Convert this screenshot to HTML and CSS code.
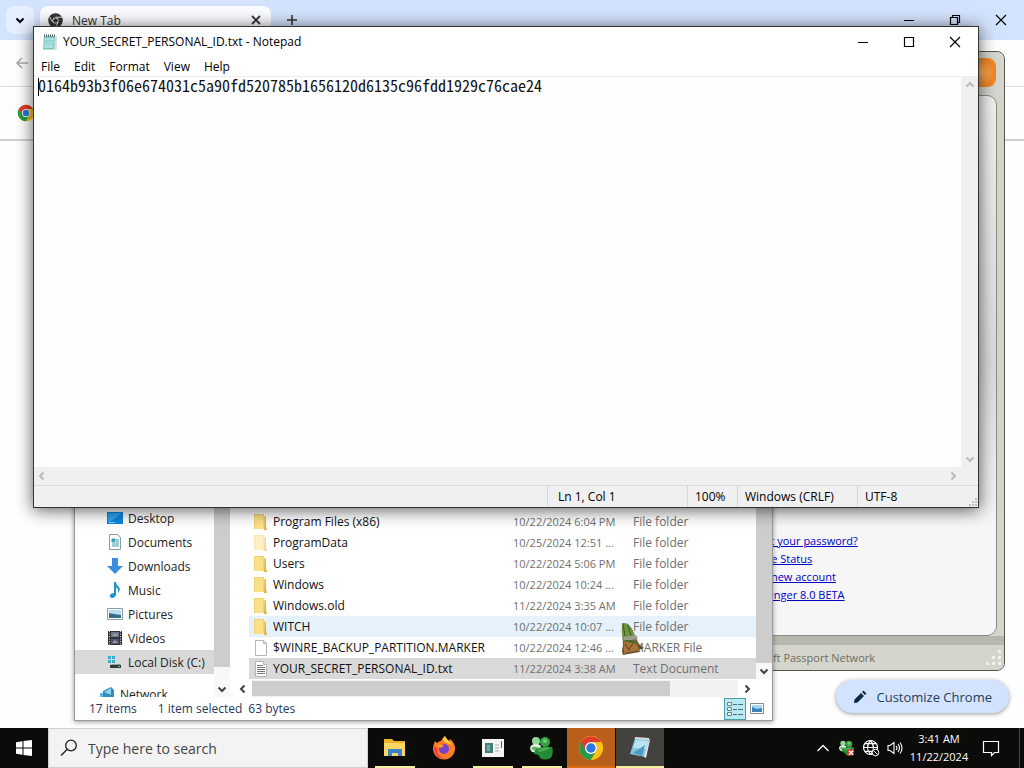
FILE: index.html
```
<!DOCTYPE html>
<html lang="en">
<head>
    <meta charset="UTF-8">
    <meta name="viewport" content="width=device-width, initial-scale=1.0">
    <title>Desktop</title>
    <link rel="stylesheet" href="styles.css">
</head>
<body>
    <!-- Shared icons -->
    <svg class="defs" aria-hidden="true">
        <symbol id="folder" viewBox="0 0 16 18">
            <path d="M1 1h10v2h2v13H1z" fill="#f3d36b"/>
            <path d="M2 2h8v14H2z" fill="#fbe08a"/>
            <path d="M12 4h1v9l1 4h-3z" fill="#dfb54a"/>
        </symbol>
        <symbol id="page" viewBox="0 0 16 18">
            <path d="M2.500 1.500h8l3 3v12h-11z" fill="#fff" stroke="#b5b5b5"/>
            <path d="M10.500 1.500v3h3" fill="none" stroke="#b5b5b5"/>
        </symbol>
        <symbol id="chrome" viewBox="0 0 24 24">
            <circle cx="12" cy="12" r="11" fill="#fbc116"/>
            <path d="M2.500 6.500A11 11 0 0 0 12 23l5-8.500-5-2.500z" fill="#269a48"/>
            <path d="M12 6.500h9.500A11 11 0 0 1 12 23l5-8.500z" fill="#fbc116"/>
            <path d="M2.500 6.500L7 14.500 12 6.500h9.500A11 11 0 0 0 2.500 6.500z" fill="#e33b2e"/>
            <circle cx="12" cy="12" r="5.500" fill="#fff"/>
            <circle cx="12" cy="12" r="4.300" fill="#2f75e0"/>
        </symbol>
        <symbol id="chev" viewBox="0 0 16 16">
            <path d="M4.500 6.500L8 10l3.500-3.500" fill="none" stroke="currentColor" stroke-width="2"/>
        </symbol>
        <symbol id="close" viewBox="0 0 12 12">
            <path d="M1 1l10 10M11 1L1 11" fill="none" stroke="currentColor" stroke-width="1.200"/>
        </symbol>
        <symbol id="min" viewBox="0 0 12 12">
            <path d="M1 6.500h10" stroke="currentColor"/>
        </symbol>
        <symbol id="buddies" viewBox="0 0 24 24">
            <circle cx="6" cy="5" r="4" fill="#8fd99a"/>
            <path d="M0 13q0-5 6-5t5 5l-3 4-6-1z" fill="#dff3df"/>
            <path d="M1 12q3-3 8 0l-2 3-4-1z" fill="#58b565"/>
            <circle cx="15" cy="6" r="5" fill="#35a343"/>
            <path d="M5 14q7-5 17-3 2 5-1 11-7 3-11 0-1-4-6-4z" fill="#238a35"/>
            <path d="M7 14q7-4 13-2-4 3-11 4z" fill="#48ad50"/>
            <circle cx="15" cy="5" r="2" fill="#76cc72"/>
        </symbol>
    </svg>

    <main class="desktop">
        <!-- Chrome -->
        <section class="chrome">
            <div class="tab-strip">
                <button class="tab-search" aria-label="Search tabs"><svg width="16" height="16"><use href="#chev"/></svg></button>
                <div class="tab">
                    <svg width="15" height="15" viewBox="0 0 16 16">
                        <circle cx="8" cy="8" r="5.500" fill="none" stroke="#333" stroke-width="4.500"/>
                        <path d="M8 4.500h7M5 9.700L1.500 4M11 9.700L7.500 15.500" stroke="#e8ecf5" stroke-width="1"/>
                        <circle cx="8" cy="8" r="2.500" fill="#333"/>
                    </svg>
                    <span class="tab-name">New Tab</span>
                    <button class="tab-close" aria-label="Close tab"><svg width="12" height="12" viewBox="0 0 12 12"><path d="M2 2l8 8M10 2l-8 8" stroke="#333" stroke-width="1.800"/></svg></button>
                </div>
                <button class="tab-new" aria-label="New tab"><svg width="12" height="12" viewBox="0 0 12 12"><path d="M6 1v10M1 6h10" stroke="#333" stroke-width="1.600"/></svg></button>
                <div class="win-buttons">
                    <button aria-label="Minimize"><svg width="12" height="12"><use href="#min"/></svg></button>
                    <button aria-label="Restore"><svg width="12" height="12" viewBox="0 0 12 12"><path d="M1.500 3.500h7v7h-7zM3.500 3.500v-2h7v7h-2" fill="none" stroke="#000" stroke-width="1.200"/></svg></button>
                    <button aria-label="Close"><svg width="12" height="12"><use href="#close"/></svg></button>
                </div>
            </div>
            <div class="toolbar">
                <button aria-label="Back"><svg width="14" height="14" viewBox="0 0 14 14"><path d="M13 7H2M7 2L2 7l5 5" fill="none" stroke="#aaa" stroke-width="1.600"/></svg></button>
            </div>
            <div class="infobar"><svg width="18" height="18"><use href="#chrome"/></svg></div>
            <div class="page">
                <button class="customize">
                    <svg width="14" height="14" viewBox="0 0 14 14"><path d="M1 13l.5-3.500L8 3l3 3-6.500 6.500zM9 2l1.500-1.500 3 3L12 5z" fill="#0c2942"/></svg>
                    Customize Chrome
                </button>
            </div>
        </section>

        <!-- Messenger -->
        <section class="messenger">
            <div class="msn-title"><button class="msn-close" aria-label="Close messenger"></button></div>
            <div class="msn-panel">
                <a href="#">Forgot your password?</a>
                <a href="#">Service Status</a>
                <a href="#">Get a new account</a>
                <a href="#">Messenger 8.0 BETA</a>
            </div>
            <div class="msn-footer">
                <span>Microsoft Passport Network</span>
                <svg width="18" height="18" viewBox="0 0 18 18"><path d="M13 1h3v3h-3zM13 7h3v3h-3zM13 13h3v3h-3zM7 7h3v3H7zM7 13h3v3H7zM1 13h3v3H1z" fill="#f2f2ed"/></svg>
            </div>
        </section>

        <!-- File explorer -->
        <section class="explorer">
            <div class="explorer-body">
                <nav class="tree">
                    <a href="#"><svg width="16" height="16" viewBox="0 0 16 16"><path d="M0 2h16v12H0z" fill="#0b84dc"/><path d="M1 3h14L3 12H1z" fill="#2fa3f2"/><path d="M2 12.500h6" stroke="#8fd0ff"/></svg>Desktop</a>
                    <a href="#"><svg width="16" height="16" viewBox="0 0 16 16"><path d="M2.500.5h8l3 3v12h-11z" fill="#fff" stroke="#8a9a9f"/><path d="M5 5h3v3H5zM9 6h3M5 10h7M5 12h7M9 8h3" fill="#4aa" stroke="#3b9dae"/></svg>Documents</a>
                    <a href="#"><svg width="16" height="16" viewBox="0 0 16 16"><path d="M5 0h6v8h5l-8 8-8-8h5z" fill="#3a8ee0"/></svg>Downloads</a>
                    <a href="#"><svg width="16" height="16" viewBox="0 0 16 16"><path d="M7 0h2q0 3 3 5 2 3-1 6 1-4-2-6v8q-1 3-4 3-3-1-2-3 1-2 4-2z" fill="#1d94c9"/></svg>Music</a>
                    <a href="#"><svg width="16" height="16" viewBox="0 0 16 16"><path d="M.5 2.500h15v11H.5z" fill="#fff" stroke="#8c9aa3"/><path d="M2 4h12v8H2z" fill="#b9dcf0"/><path d="M2 7l5 1 7 1v3H2z" fill="#3a6e87"/></svg>Pictures</a>
                    <a href="#"><svg width="16" height="16" viewBox="0 0 16 16"><path d="M1 1h14v14H1z" fill="#333"/><path d="M4 2h8v5H4z" fill="#6b7895"/><path d="M4 9h8v5H4z" fill="#4e5875"/><path d="M2.500 1v14M13.500 1v14" stroke="#ddd" stroke-dasharray="1 1.500"/><path d="M5 6l3-3 3 3zM5 13l3-3 3 3z" fill="#a98"/></svg>Videos</a>
                    <a href="#" class="active"><svg width="16" height="16" viewBox="0 0 16 16"><path d="M1 2h3v3H1zM5 2h3v3H5zM1 6h3v3H1zM5 6h3v3H5z" fill="#35b2d0"/><path d="M3 11h11v3H3z" fill="#333b3f"/><path d="M3 11l2-1h8l1 1z" fill="#8d9699"/><path d="M11 12.500h2" stroke="#3ee07c"/></svg>Local Disk (C:)</a>
                    <a href="#" class="network"><svg width="16" height="16" viewBox="0 0 16 16"><path d="M1 7h7v6H1z" fill="#56b8ea"/><path d="M4 5l8-4 3 3v9H4z" fill="#318dbd"/><path d="M5 6l7-4v7z" fill="#8fd3f2"/></svg>Network</a>
                </nav>
                <div class="vbar"><span class="vthumb nav-thumb"></span><button aria-label="Scroll tree down"><svg width="16" height="16"><use href="#chev"/></svg></button></div>
                <div class="files">
                    <div class="list">
                        <table>
                            <colgroup><col class="c-name"><col class="c-date"><col></colgroup>
                            <tbody>
                                <tr><td><svg width="16" height="18"><use href="#folder"/></svg>Program Files (x86)</td><td>10/22/2024 6:04 PM</td><td>File folder</td></tr>
                                <tr><td><svg width="16" height="18" class="faded"><use href="#folder"/></svg>ProgramData</td><td>10/25/2024 12:51 ...</td><td>File folder</td></tr>
                                <tr><td><svg width="16" height="18"><use href="#folder"/></svg>Users</td><td>10/22/2024 5:06 PM</td><td>File folder</td></tr>
                                <tr><td><svg width="16" height="18"><use href="#folder"/></svg>Windows</td><td>10/22/2024 10:24 ...</td><td>File folder</td></tr>
                                <tr><td><svg width="16" height="18"><use href="#folder"/></svg>Windows.old</td><td>11/22/2024 3:35 AM</td><td>File folder</td></tr>
                                <tr class="hovered"><td><svg width="16" height="18"><use href="#folder"/></svg>WITCH</td><td>10/22/2024 10:07 ...</td><td>File folder</td></tr>
                                <tr><td><svg width="16" height="18"><use href="#page"/></svg>$WINRE_BACKUP_PARTITION.MARKER</td><td>10/22/2024 12:46 ...</td><td>MARKER File</td></tr>
                                <tr class="selected"><td><svg width="16" height="18" viewBox="0 0 16 18"><use href="#page"/><path d="M4 5.500h6M4 7.500h8M4 9.500h8M4 11.500h8M4 13.500h8" stroke="#777"/></svg>YOUR_SECRET_PERSONAL_ID.txt</td><td>11/22/2024 3:38 AM</td><td>Text Document</td></tr>
                            </tbody>
                        </table>
                        <div class="vbar"><span class="vthumb"></span><button aria-label="Scroll files down"><svg width="16" height="16"><use href="#chev"/></svg></button></div>
                    </div>
                    <div class="hbar">
                        <button aria-label="Scroll left"><svg class="left" width="16" height="16"><use href="#chev"/></svg></button>
                        <div class="htrack"><span class="hthumb"></span></div>
                        <button aria-label="Scroll right"><svg class="right" width="16" height="16"><use href="#chev"/></svg></button>
                    </div>
                </div>
            </div>
            <footer class="explorer-status">
                <span class="count">17 items</span>
                <span>1 item selected</span>
                <span>63 bytes</span>
                <div class="views">
                    <button class="on" aria-label="Details"><svg width="18" height="16" viewBox="0 0 18 16"><path d="M1.500 1.500h4v3h-4zM1.500 6.500h4v3h-4zM1.500 11.500h4v3h-4z" fill="#fff" stroke="#6c7f86"/><path d="M7 3.500h4M12 3.500h5M7 8.500h4M12 8.500h5M7 13.500h4M12 13.500h5" stroke="#476f79"/></svg></button>
                    <button aria-label="Thumbnails"><svg width="14" height="12" viewBox="0 0 14 12"><path d="M.5.5h13v10H.5z" fill="#fff" stroke="#7d8b94"/><path d="M2 2h10v7H2z" fill="#3b82bd"/><path d="M2 2h10v3L7 6 2 4z" fill="#a6d4f3"/></svg></button>
                </div>
            </footer>
        </section>

        <!-- Notepad -->
        <section class="notepad">
            <header class="np-title">
                <svg width="16" height="16" viewBox="0 0 16 16"><path d="M2 2h13l-1 13.500H1z" fill="#7cc5c0"/><path d="M3 4h9l-1 10H2z" fill="#a9e3df"/><path d="M13 2h2v13h-3z" fill="#d8dedd"/><path d="M2 1.500h12" stroke="#4c5a5a" stroke-width="2" stroke-dasharray="1 1"/><path d="M3 6.500h8M3 8.500h8M3 10.500h8" stroke="#8fd2cd"/></svg>
                <h1>YOUR_SECRET_PERSONAL_ID.txt - Notepad</h1>
                <div class="win-buttons">
                    <button aria-label="Minimize"><svg width="12" height="12"><use href="#min"/></svg></button>
                    <button aria-label="Maximize"><svg width="12" height="12" viewBox="0 0 12 12"><path d="M1.500 1.500h9v9h-9z" fill="none" stroke="#000" stroke-width="1.200"/></svg></button>
                    <button aria-label="Close"><svg width="12" height="12"><use href="#close"/></svg></button>
                </div>
            </header>
            <div class="np-menu">
                <button>File</button>
                <button>Edit</button>
                <button>Format</button>
                <button>View</button>
                <button>Help</button>
            </div>
            <div class="np-editor">
                <span class="caret"></span>
                <textarea aria-label="Text" spellcheck="false">0164b93b3f06e674031c5a90fd520785b1656120d6135c96fdd1929c76cae24</textarea>
                <div class="np-vbar">
                    <button aria-label="Scroll up"><svg class="up" width="16" height="16"><use href="#chev"/></svg></button>
                    <button aria-label="Scroll down"><svg width="16" height="16"><use href="#chev"/></svg></button>
                </div>
            </div>
            <div class="np-hbar">
                <button aria-label="Scroll text left"><svg class="left" width="16" height="16"><use href="#chev"/></svg></button>
                <button aria-label="Scroll text right"><svg class="right" width="16" height="16"><use href="#chev"/></svg></button>
            </div>
            <footer class="np-status">
                <span class="pos">Ln 1, Col 1</span>
                <span class="zoom">100%</span>
                <span class="eol">Windows (CRLF)</span>
                <span class="enc">UTF-8</span>
                <svg width="10" height="10" viewBox="0 0 10 10"><path d="M7 1h2v2H7zM7 4h2v2H7zM7 7h2v2H7zM4 4h2v2H4zM4 7h2v2H4zM1 7h2v2H1z" fill="#bfbfbf"/></svg>
            </footer>
        </section>

        <!-- Mouse pointer -->
        <svg class="pointer" width="26" height="34" viewBox="0 0 26 34">
            <path d="M1 1l6 1 4 5 4 9 3 6 5 4-5 2 1 2-17 3q-2-4 0-9z" fill="#6e5a30"/>
            <path d="M1 1l6 1 4 5 4 9-13 3q-2-9-1-18z" fill="#6f9440"/>
            <path d="M2 2l2 12M7 3l3 11" stroke="#3c5c24" fill="none"/>
            <path d="M3 15l12-2 2 4-14 2z" fill="#9aa08c"/>
            <path d="M3 20l11-2 4 10-15 3z" fill="#a8743a"/>
            <path d="M4 22l5 7M14 19l-6 8M17 23l4 4" stroke="#4d3c22" fill="none"/>
            <path d="M2 18h10l5 4-7-1z" fill="#4c6a2e"/>
        </svg>
    </main>

    <!-- Taskbar -->
    <footer class="taskbar">
        <button class="start" aria-label="Start"><svg width="16" height="16" viewBox="0 0 16 16"><path d="M0 2.300L6.500 1.300v6.200H0zM7.500 1.100L16 0v7.500H7.500zM0 8.500h6.500v6.200L0 13.700zM7.500 8.500H16V16l-8.500-1.100z" fill="#fff"/></svg></button>
        <div class="search">
            <svg width="18" height="18" viewBox="0 0 18 18"><circle cx="11" cy="6.500" r="5.300" fill="none" stroke="#222" stroke-width="1.300"/><path d="M7 10.500L1 16.500" stroke="#222" stroke-width="1.400"/></svg>
            <input type="text" placeholder="Type here to search" aria-label="Type here to search">
        </div>
        <div class="apps">
            <button class="open" aria-label="File Explorer"><svg width="24" height="24" viewBox="0 0 24 24"><path d="M1 3h8l2 2h11v15H1z" fill="#f0b429"/><path d="M1 7h21v13H1z" fill="#fdd663"/><path d="M5 20v-7h14v7h-4v-3H9v3z" fill="#3b82cf"/></svg></button>
            <button aria-label="Firefox"><svg width="24" height="24" viewBox="0 0 24 24"><path d="M3 5l2 2q2-2 4-2 1-3 4-5 1 3 4 5l1-2q5 4 5 9a11 11 0 0 1-22 1Q1 9 3 5z" fill="#ff7b24"/><path d="M13 0q1 3 5 6 5 5 2 12 4-8-2-10-6-1-7-5z" fill="#ffd33b"/><path d="M2 11q0 12 12 12Q4 21 5 12z" fill="#ef3651"/><circle cx="12" cy="13" r="5" fill="#7542c9"/><path d="M5 9q5-2 7 1l-4 2z" fill="#ffa12e"/></svg></button>
            <button class="open" aria-label="Application"><svg width="24" height="24" viewBox="0 0 24 24"><path d="M1 3h22v18H1z" fill="#f4f4f4"/><path d="M4 7h8v10H4z" fill="#417f78"/><path d="M6 9h3v6H6z" fill="#74aaa0"/><path d="M14 9h4M14 12h4M14 15h4" stroke="#aaa"/><path d="M20.500 5v7" stroke="#555"/></svg></button>
            <button class="open" aria-label="Messenger"><svg width="24" height="24"><use href="#buddies"/></svg></button>
            <button class="open current" aria-label="Chrome"><svg width="26" height="26"><use href="#chrome"/></svg></button>
            <button class="open lit" aria-label="Notepad"><svg width="24" height="24" viewBox="0 0 24 24"><path d="M7 2l14 1-4 18-15-3z" fill="#86c5df"/><path d="M8 4l12 1-2 8-13-1z" fill="#b9e3f0"/><path d="M21 3l1 1-4 18-2-1z" fill="#e4e8ea"/><path d="M7 2l14 1" stroke="#d9dddd" stroke-width="2"/><path d="M5 17l12-8-3 11z" fill="#4e9abf"/></svg></button>
        </div>
        <div class="tray">
            <button aria-label="Hidden icons"><svg width="14" height="14" viewBox="0 0 14 14"><path d="M1.500 10L7 4.500l5.500 5.500" fill="none" stroke="#fff" stroke-width="1.300"/></svg></button>
            <button aria-label="Messenger status"><svg width="16" height="16" viewBox="0 0 24 24"><use href="#buddies"/><path d="M13 14h9v9h-9z" fill="#e33"/><path d="M15 16l6 6M21 16l-6 6" stroke="#fff" stroke-width="2"/></svg></button>
            <button aria-label="Network"><svg width="18" height="18" viewBox="0 0 18 18"><g fill="none" stroke="#fff" stroke-width="1.200"><circle cx="8.500" cy="8.500" r="7"/><path d="M8.500 1.500q-6 7 0 14M8.500 1.500q6 7 0 14M1.500 8.500h14M2.500 4.700h12M2.500 12.300h8"/></g><circle cx="13.500" cy="13.500" r="3.300" fill="#0b0b09" stroke="#fff"/><path d="M11.500 11.500l4 4" stroke="#fff"/></svg></button>
            <button aria-label="Volume"><svg width="16" height="16" viewBox="0 0 16 16"><g fill="none" stroke="#fff" stroke-width="1.100"><path d="M1 5.500h2l4-3v11l-4-3H1z"/><path d="M9 6q2 2 0 4M11 4q3 4 0 8M13 2.500q4 5.500 0 11"/></g></svg></button>
            <div class="clock"><time>3:41 AM</time><time>11/22/2024</time></div>
            <button class="notify" aria-label="Notifications"><svg width="18" height="18" viewBox="0 0 18 18"><path d="M1.500 2.500h15v11h-4l-3 3v-3h-8z" fill="none" stroke="#fff" stroke-width="1.200"/></svg></button>
        </div>
    </footer>
</body>
</html>
```
FILE: styles.css
```
* {
    box-sizing: border-box;
}
body {
    margin: 0;
    height: 100vh;
    display: flex;
    flex-direction: column;
    overflow: hidden;
    font-family: "Open Sans", "Noto Sans", sans-serif;
    font-size: 12px;
    color: #000;
}
button {
    display: flex;
    align-items: center;
    justify-content: center;
    padding: 0;
    border: none;
    background: none;
    font: inherit;
    color: inherit;
}
svg {
    display: block;
    flex: none;
}
.defs {
    position: absolute;
    width: 0;
    height: 0;
}
.up {
    transform: rotate(180deg);
}
.left {
    transform: rotate(90deg);
}
.right {
    transform: rotate(-90deg);
}
.desktop {
    position: relative;
    flex: 1;
    overflow: hidden;
    background: #fff;
}

/* Chrome */
.chrome {
    height: 100%;
    display: flex;
    flex-direction: column;
    background: #fefefe;
}
.tab-strip {
    display: flex;
    height: 40px;
    background: #d3e3fd;
}
.tab-search {
    width: 28px;
    height: 28px;
    margin: 6px 6px 0;
    border-radius: 8px;
    background: #e6effd;
}
.tab {
    display: flex;
    align-items: center;
    gap: 9px;
    width: 231px;
    height: 34px;
    margin-top: 6px;
    padding: 0 9px 6px 8px;
    border-radius: 8px 8px 0 0;
    background: #fafbfe;
    color: #333;
}
.tab-name {
    flex: 1;
}
.tab-new {
    width: 28px;
    height: 28px;
    margin: 6px 7px 0;
}
.win-buttons {
    display: flex;
    margin-left: auto;
}
.win-buttons button {
    width: 46px;
}
.toolbar {
    display: flex;
    height: 47px;
    padding-left: 15px;
    border-bottom: 1px solid #ddd;
    background: #fefefe;
}
.infobar {
    display: flex;
    align-items: center;
    height: 54px;
    padding-left: 17px;
    border-bottom: 2px solid #d0d0d0;
}
.page {
    flex: 1;
    display: flex;
    align-items: flex-end;
    justify-content: flex-end;
    padding: 0 15px 15px;
}
.customize {
    gap: 9px;
    height: 33px;
    padding: 0 17px;
    border-radius: 17px;
    background: #d3e3fd;
    box-shadow: 0 1px 4px rgba(0, 0, 0, 0.4);
    font-size: 13px;
    color: #22405f;
}

/* Messenger */
.messenger {
    position: absolute;
    top: 51px;
    right: 19px;
    bottom: 57px;
    width: 340px;
    display: flex;
    flex-direction: column;
    border: 1px solid #55554c;
    border-radius: 8px;
    background: #d5d5cb;
    overflow: hidden;
}
.msn-title {
    display: flex;
    justify-content: flex-end;
    height: 43px;
    padding: 6px 8px 0 0;
    background: #d6d6d0;
}
.msn-close {
    width: 30px;
    height: 29px;
    border-radius: 8px;
    background: radial-gradient(#ffb25c, #f18420 70%, #f5b06a);
}
.msn-panel {
    flex: 1;
    display: flex;
    flex-direction: column;
    align-items: flex-start;
    justify-content: flex-end;
    margin-right: 7px;
    padding: 0 0 31px 74px;
    border: 1px solid #8b8b82;
    border-radius: 0 10px 10px 0;
    background: linear-gradient(#f0f0ee, #dcdcdc 50%, #f6f6f6 80%);
}
.msn-panel a {
    font-size: 11px;
    line-height: 18px;
    color: #0000c8;
}
.msn-footer {
    display: flex;
    align-items: center;
    justify-content: space-between;
    height: 34px;
    padding: 0 1px 0 66px;
    border-top: 9px solid #b7b7ae;
    background: #d5d5cb;
    font-size: 11px;
    color: #6c6c64;
}

/* Explorer */
.explorer {
    position: absolute;
    left: 74px;
    right: 251px;
    bottom: 7px;
    height: 240px;
    display: flex;
    flex-direction: column;
    justify-content: flex-end;
    border: 1px solid #999;
    background: #fff;
    box-shadow: 0 1px 5px rgba(0, 0, 0, 0.4);
}
.explorer-body {
    display: flex;
    height: 191px;
}
.tree {
    width: 139px;
    overflow: hidden;
}
.tree a {
    display: flex;
    align-items: center;
    gap: 5px;
    height: 24px;
    padding-left: 32px;
    color: #222;
    text-decoration: none;
    white-space: nowrap;
}
.tree .active {
    background: #d9d9d9;
}
.tree .network {
    margin-top: 8px;
    padding-left: 24px;
}
.vbar {
    display: flex;
    flex-direction: column;
    width: 16px;
    background: #f8f8f8;
    color: #444;
}
.vthumb {
    flex: 1;
    background: #cdcdcd;
}
.nav-thumb {
    margin-bottom: 14px;
}
.files {
    flex: 1;
    display: flex;
    flex-direction: column;
    justify-content: space-between;
    padding-left: 4px;
}
.list {
    display: flex;
    height: 173px;
    padding-left: 15px;
}
.list table {
    flex: 1;
    align-self: flex-end;
    table-layout: fixed;
    border-collapse: collapse;
}
.c-name {
    width: 264px;
}
.c-date {
    width: 120px;
}
.list td {
    height: 21px;
    padding: 0;
    line-height: 18px;
    color: #6f6f6f;
    white-space: nowrap;
}
.list td:first-child {
    display: flex;
    align-items: center;
    gap: 4px;
    padding-left: 4px;
    color: #111;
}
.list td:nth-child(2) {
    font-size: 11px;
}
.faded {
    opacity: 0.5;
}
.hovered {
    background: #e5f2fb;
}
.selected {
    background: #d9d9d9;
}
.hbar {
    display: flex;
    height: 17px;
    margin-right: 16px;
    color: #444;
}
.hbar button {
    width: 18px;
}
.htrack {
    flex: 1;
    display: flex;
    background: #f2f2f2;
}
.hthumb {
    width: 86%;
    margin: 1px 0;
    background: #cdcdcd;
}
.explorer-status {
    display: flex;
    align-items: center;
    height: 23px;
    padding-left: 14px;
    color: #1e395b;
}
.explorer-status span {
    margin-right: 6px;
}
.explorer-status .count {
    margin-right: 21px;
}
.views {
    display: flex;
    margin-left: auto;
    padding-right: 4px;
}
.views button {
    width: 22px;
    height: 22px;
}
.views .on {
    border: 1px solid #4d9dab;
    background: #b8eaf2;
}

/* Notepad */
.notepad {
    position: absolute;
    top: 26px;
    left: 33px;
    right: 45px;
    bottom: 220px;
    display: flex;
    flex-direction: column;
    border: 1px solid #333;
    background: #f0f0f0;
    box-shadow: 0 2px 16px rgba(0, 0, 0, 0.65);
}
.np-title {
    display: flex;
    align-items: center;
    height: 29px;
    padding-left: 8px;
    background: #fff;
}
.np-title h1 {
    margin: 0 0 0 5px;
    font-size: 12px;
    font-weight: normal;
}
.np-title .win-buttons {
    align-self: stretch;
}
.np-menu {
    display: flex;
    gap: 14px;
    height: 20px;
    padding-left: 7px;
    background: #fff;
}
.np-editor {
    position: relative;
    flex: 1;
    display: flex;
    border-top: 1px solid #eee;
}
.np-editor textarea {
    flex: 1;
    border: none;
    outline: none;
    resize: none;
    padding: 0 4px;
    background: #fefefe;
    font-family: "Noto Sans Mono CJK SC", "Noto Sans Mono", "Liberation Mono", monospace;
    font-size: 16px;
    line-height: 16px;
    color: #111;
    overflow: hidden;
}
.caret {
    position: absolute;
    top: 1px;
    left: 4px;
    width: 1px;
    height: 18px;
    background: #000;
}
.np-vbar {
    display: flex;
    flex-direction: column;
    justify-content: space-between;
    width: 17px;
    color: #bbb;
}
.np-hbar {
    display: flex;
    justify-content: space-between;
    height: 18px;
    padding-right: 17px;
    color: #bbb;
}
.np-status {
    display: flex;
    align-items: stretch;
    justify-content: flex-end;
    height: 22px;
    border-top: 1px solid #dadada;
    line-height: 22px;
}
.np-status span {
    padding-left: 7px;
    border-left: 1px solid #d8d8d8;
}
.np-status .pos {
    width: 140px;
    padding-left: 10px;
}
.np-status .zoom {
    width: 50px;
}
.np-status .eol {
    width: 120px;
}
.np-status .enc {
    width: 111px;
}
.np-status svg {
    align-self: flex-end;
}
.pointer {
    position: absolute;
    top: 622px;
    left: 621px;
}

/* Taskbar */
.taskbar {
    display: flex;
    height: 40px;
    background: #0b0b09;
    color: #fff;
}
.start {
    width: 48px;
}
.search {
    display: flex;
    align-items: center;
    gap: 10px;
    width: 320px;
    padding-left: 11px;
    border: 1px solid #d0d0d0;
    background: #f3f3f3;
}
.search input {
    flex: 1;
    padding: 0;
    border: none;
    background: none;
    font: 14px "Open Sans", "Noto Sans", sans-serif;
}
.search input::placeholder {
    color: #444;
}
.apps {
    display: flex;
    gap: 1px;
    padding-left: 3px;
}
.apps button {
    position: relative;
    width: 48px;
}
.apps .open::after {
    content: "";
    position: absolute;
    left: 4px;
    right: 4px;
    bottom: 0;
    height: 2px;
    background: #f5f0a0;
}
.apps .current {
    background: #b85f1c;
}
.apps .current::after {
    left: 0;
    right: 0;
    background: #e06a10;
}
.apps .lit {
    background: #43423f;
}
.apps .lit::after {
    left: 0;
    right: 0;
}
.tray {
    display: flex;
    margin-left: auto;
    padding-right: 4px;
}
.tray button {
    width: 24px;
}
.clock {
    display: flex;
    flex-direction: column;
    justify-content: center;
    width: 64px;
    font-size: 11px;
    line-height: 18px;
    text-align: center;
}
.tray .notify {
    width: 49px;
    padding-right: 9px;
    border-right: 1px solid #444;
}
```
